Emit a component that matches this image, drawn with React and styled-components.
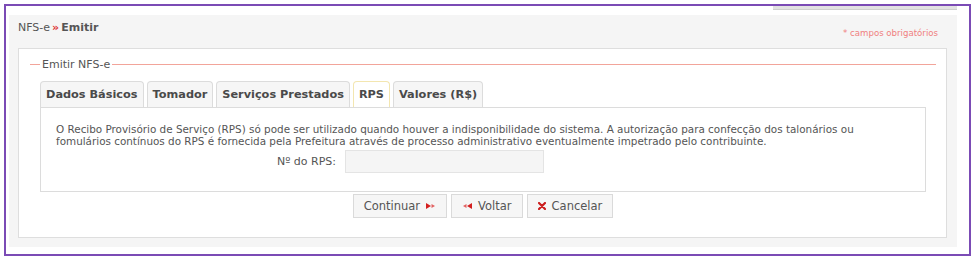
import React from "react";
import styled, { createGlobalStyle } from "styled-components";

const GlobalStyle = createGlobalStyle`
  html, body {
    margin: 0;
    padding: 0;
    background: #fff;
  }
  * { box-sizing: border-box; }
  body {
    font-family: "DejaVu Sans", Verdana, sans-serif;
    color: #555;
  }
`;

const Frame = styled.div`
  margin: 4px 0 0 4px;
  width: 967px;
  height: 252px;
  border: 2px solid #7b4bb5;
  padding: 0 12px 0 3px;
  background: #fff;
`;

const TopStrip = styled.div`
  height: 9px;
  display: flex;
  justify-content: flex-end;
`;

const StripTab = styled.div`
  width: 184px;
  height: 4px;
  background: #e2e2e2;
  border-bottom: 1px solid #cfcfcf;
`;

const Panel = styled.div`
  background: #f5f5f5;
  height: 232px;
  padding: 0 10px 0 9px;
`;

const Header = styled.div`
  height: 33px;
  display: flex;
  justify-content: space-between;
  align-items: flex-start;
`;

const Crumb = styled.div`
  padding-top: 6px;
  font-size: 11px;
  color: #555;
  b { font-weight: bold; }
  span { color: #d33; font-weight: bold; margin: 0 2px; }
`;

const Required = styled.div`
  padding-top: 13px;
  padding-right: 9px;
  font-size: 8.6px;
  color: #f07f7f;
`;

const WhiteBox = styled.div`
  background: #fff;
  border: 1px solid #dedede;
  height: 190px;
  padding: 9px 10px 0 11px;
`;

const Legend = styled.div`
  display: flex;
  align-items: center;
  gap: 2px;
  font-size: 11px;
  color: #555;
  &::before, &::after {
    content: "";
    height: 1px;
    background: #f2a49a;
  }
  &::before { width: 10px; }
  &::after { flex: 1; }
`;

const Body = styled.div`
  padding: 10px 10px 0 10px;
`;

const Tabs = styled.div`
  display: flex;
  gap: 3px;
  height: 26px;
`;

const Tab = styled.div`
  height: 26px;
  padding: 0 5px;
  display: flex;
  align-items: center;
  font-size: 11.3px;
  font-weight: bold;
  color: #4a4a4a;
  background: ${(p) => (p.$active ? "#fff" : "#f6f6f6")};
  border: 1px solid ${(p) => (p.$active ? "#f3e6b0" : "#dcdcdc")};
  border-bottom: none;
  border-radius: 4px 4px 0 0;
`;

const TabPanel = styled.div`
  border: 1px solid #dcdcdc;
  height: 85px;
  padding: 15px 15px 0 15px;
`;

const Text = styled.p`
  margin: 0;
  font-size: 10.4px;
  line-height: 12px;
  color: #555;
`;

const Row = styled.div`
  margin-top: 3px;
  display: grid;
  grid-template-columns: 280px 199px;
  column-gap: 9px;
  align-items: center;
`;

const Label = styled.label`
  text-align: right;
  font-size: 11px;
  color: #555;
`;

const Input = styled.input`
  height: 23px;
  background: #f5f5f5;
  border: 1px solid #e4e4e4;
  outline: none;
`;

const Buttons = styled.div`
  margin-top: 2px;
  display: flex;
  justify-content: center;
  gap: 4px;
`;

const Button = styled.button`
  height: 24px;
  padding: 0 10px;
  display: flex;
  align-items: center;
  gap: 6px;
  font-family: "DejaVu Sans", Verdana, sans-serif;
  font-size: 11.5px;
  color: #555;
  background: #f6f6f6;
  border: 1px solid #dadada;
  cursor: pointer;
`;

const NextIcon = () => (
  <svg width="10" height="6" viewBox="0 0 10 6">
    <path d="M0 0 L5 3 L0 6 Z" fill="#d42020" />
    <path d="M5.5 1 L9 3 L5.5 5 Z" fill="#e26060" />
  </svg>
);

const BackIcon = () => (
  <svg width="10" height="6" viewBox="0 0 10 6">
    <path d="M4.5 1 L1 3 L4.5 5 Z" fill="#e26060" />
    <path d="M10 0 L5 3 L10 6 Z" fill="#d42020" />
  </svg>
);

const CloseIcon = () => (
  <svg width="8" height="8" viewBox="0 0 8 8">
    <path d="M1 1 L7 7 M7 1 L1 7" stroke="#cc1f1f" strokeWidth="2.2" strokeLinecap="round" />
  </svg>
);

const tabs = ["Dados Básicos", "Tomador", "Serviços Prestados", "RPS", "Valores (R$)"];

export default function App() {
  return (
    <>
      <GlobalStyle />
      <Frame>
        <TopStrip>
          <StripTab />
        </TopStrip>
        <Panel>
          <Header>
            <Crumb>
              NFS-e<span>»</span><b>Emitir</b>
            </Crumb>
            <Required>* campos obrigatórios</Required>
          </Header>
          <WhiteBox>
            <Legend>Emitir NFS-e</Legend>
            <Body>
              <Tabs>
                {tabs.map((t) => (
                  <Tab key={t} $active={t === "RPS"}>
                    {t}
                  </Tab>
                ))}
              </Tabs>
              <TabPanel>
                <Text>
                  O Recibo Provisório de Serviço (RPS) só pode ser utilizado quando houver a
                  indisponibilidade do sistema. A autorização para confecção dos talonários ou
                  fomulários contínuos do RPS é fornecida pela Prefeitura através de processo
                  administrativo eventualmente impetrado pelo contribuinte.
                </Text>
                <Row>
                  <Label htmlFor="rps">Nº do RPS:</Label>
                  <Input id="rps" />
                </Row>
              </TabPanel>
              <Buttons>
                <Button>
                  Continuar <NextIcon />
                </Button>
                <Button>
                  <BackIcon /> Voltar
                </Button>
                <Button>
                  <CloseIcon /> Cancelar
                </Button>
              </Buttons>
            </Body>
          </WhiteBox>
        </Panel>
      </Frame>
    </>
  );
}
